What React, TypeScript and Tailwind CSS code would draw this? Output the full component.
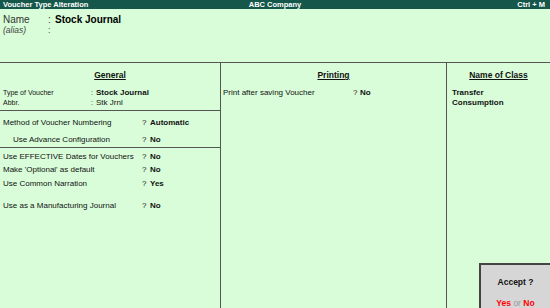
import React from "react";

function Row({ label, value, bold = true, indent = false }: { label: string; value: string; bold?: boolean; indent?: boolean }) {
  return (
    <div className="flex h-[11px] items-center">
      <span className={`w-[139px] ${indent ? "pl-[10px]" : ""}`}>{label}</span>
      <span className="w-[8px]">?</span>
      <span className={bold ? "font-bold" : ""}>{value}</span>
    </div>
  );
}

export default function App() {
  return (
    <div className="relative flex h-[308px] w-[550px] flex-col overflow-hidden bg-[#d9fdd9] text-[8px] leading-none text-[#111] [font-family:'Liberation_Sans',Arial,sans-serif]">
      {/* title bar */}
      <div className="flex h-[9px] items-center justify-between bg-[#15574a] px-[3px] text-[7.5px] font-bold text-white">
        <span className="w-[120px]">Voucher Type Alteration</span>
        <span>ABC Company</span>
        <span className="w-[120px] pr-[2px] text-right">Ctrl + M</span>
      </div>

      {/* name block */}
      <div className="h-[54px] border-b border-[#555] px-[3px] pt-[5px]">
        <div className="flex h-[11px] items-center text-[10px]">
          <span className="w-[45px] text-[#333]">Name</span>
          <span className="w-[7px] text-[#333]">:</span>
          <span className="font-bold text-black">Stock Journal</span>
        </div>
        <div className="flex h-[11px] items-center text-[8.5px] text-[#444]">
          <span className="w-[45px] italic">(alias)</span>
          <span>:</span>
        </div>
      </div>

      {/* columns */}
      <div className="flex flex-1">
        <div className="flex w-[221px] flex-col border-r border-[#555]">
          <div className="px-[3px] pt-[8px]">
            <div className="mb-[8px] text-center text-[8.5px] font-bold underline">General</div>
            <div className="flex h-[10px] items-center text-[7px]">
              <span className="w-[88px]">Type of Voucher</span>
              <span className="w-[5px]">:</span>
              <span className="text-[8px] font-bold">Stock Journal</span>
            </div>
            <div className="flex h-[10px] items-center text-[7px]">
              <span className="w-[88px]">Abbr.</span>
              <span className="w-[5px]">:</span>
              <span className="text-[8px]">Stk Jrnl</span>
            </div>
          </div>
          <div className="mt-[2px] border-t border-[#555] px-[3px] pt-[7px] pb-[1px]">
            <Row label="Method of Voucher Numbering" value="Automatic" />
            <div className="h-[6px]" />
            <Row label="Use Advance Configuration" value="No" indent />
          </div>
          <div className="border-t border-[#555] px-[3px] pt-[4px]">
            <Row label="Use EFFECTIVE Dates for Vouchers" value="No" />
            <div className="h-[2px]" />
            <Row label="Make 'Optional' as default" value="No" />
            <div className="h-[3px]" />
            <Row label="Use Common Narration" value="Yes" />
            <div className="h-[11px]" />
            <Row label="Use as a Manufacturing Journal" value="No" />
          </div>
        </div>

        <div className="w-[226px] border-r border-[#555] px-[2px] pt-[8px]">
          <div className="mb-[8px] text-center text-[8.5px] font-bold underline">Printing</div>
          <div className="flex h-[10px] items-center">
            <span className="w-[130px]">Print after saving Voucher</span>
            <span className="w-[7px]">?</span>
            <span className="font-bold">No</span>
          </div>
        </div>

        <div className="flex-1 px-[5px] pt-[8px]">
          <div className="mb-[8px] text-center text-[8.5px] font-bold underline">Name of Class</div>
          <div className="font-bold leading-[10px]">Transfer</div>
          <div className="font-bold leading-[10px]">Consumption</div>
        </div>
      </div>

      {/* accept dialog */}
      <div className="absolute bottom-0 right-0 flex h-[45px] w-[71px] flex-col items-center border-l-2 border-t-2 border-[#444] bg-[#d6d6d6] pt-[13px]">
        <div className="text-[8.5px] font-bold">Accept ?</div>
        <div className="mt-[12px] text-[8.5px] font-bold">
          <span className="text-[#f00]">Yes</span>
          <span className="font-normal text-[#999]"> or </span>
          <span className="text-[#f00]">No</span>
        </div>
      </div>
    </div>
  );
}
